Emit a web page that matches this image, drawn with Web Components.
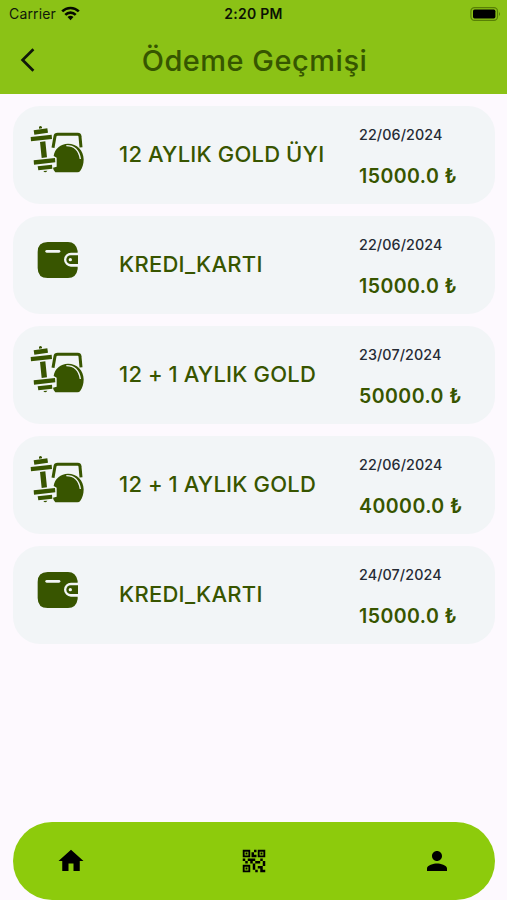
<!DOCTYPE html>
<html lang="tr">
<head>
<meta charset="utf-8">
<title>Ödeme Geçmişi</title>
<style>
  body {
    margin: 0;
    background: #fdf9fe;
    font-family: Inter, "Liberation Sans", sans-serif;
  }
</style>
</head>
<body>

<payment-app>
  <status-bar slot="top"></status-bar>
  <app-header slot="top">Ödeme Geçmişi</app-header>
  <payment-card icon="gym">
    12 AYLIK GOLD ÜYI
    <span slot="date">22/06/2024</span>
    <span slot="amount">15000.0 ₺</span>
  </payment-card>
  <payment-card icon="wallet">
    KREDI_KARTI
    <span slot="date">22/06/2024</span>
    <span slot="amount">15000.0 ₺</span>
  </payment-card>
  <payment-card icon="gym">
    12 + 1 AYLIK GOLD
    <span slot="date">23/07/2024</span>
    <span slot="amount">50000.0 ₺</span>
  </payment-card>
  <payment-card icon="gym">
    12 + 1 AYLIK GOLD
    <span slot="date">22/06/2024</span>
    <span slot="amount">40000.0 ₺</span>
  </payment-card>
  <payment-card icon="wallet">
    KREDI_KARTI
    <span slot="date">24/07/2024</span>
    <span slot="amount">15000.0 ₺</span>
  </payment-card>
  <nav-bar slot="bottom"></nav-bar>
</payment-app>

<template id="payment-app-template">
  <style>
    :host {
      display: flex;
      flex-direction: column;
      height: 900px;
      overflow: hidden;
    }
    header { background: #8bc216; height: 94px; }
    main {
      flex: 1;
      display: flex;
      flex-direction: column;
      gap: 12px;
      padding: 12px 12px 0 13px;
    }
  </style>
  <header><slot name="top"></slot></header>
  <main><slot></slot></main>
  <slot name="bottom"></slot>
</template>

<template id="status-bar-template">
  <style>
    :host {
      display: grid;
      grid-template-columns: 1fr auto 1fr;
      align-items: center;
      height: 27px;
      padding: 0 6px 0 9px;
      font-size: 14px;
      line-height: 26px;
      color: #10180a;
    }
    .carrier { display: flex; align-items: center; gap: 6px; letter-spacing: .15px; }
    .carrier svg { margin: -1px 0 0 -1px; }
    .time {
      margin-right: 3px;
      font-size: 14px;
      font-weight: 600;
      letter-spacing: .25px;
      color: #0b1204;
    }
    .battery { justify-self: end; }
    svg { display: block; }
  </style>
  <div class="carrier">
    <span>Carrier</span>
    <svg width="19" height="15" viewBox="0 0 19 15">
      <g fill="none" stroke="#050a00" stroke-width="2.6">
        <path d="M1.2 5.4a11.8 11.8 0 0 1 16.6 0"/>
        <path d="M4.3 8.8a7.4 7.4 0 0 1 10.4 0"/>
      </g>
      <path fill="#050a00" d="M6.5 11.1a4.3 4.3 0 0 1 6 0l-3 3.1z"/>
    </svg>
  </div>
  <span class="time">2:20 PM</span>
  <svg class="battery" width="31" height="14" viewBox="0 0 31 14">
    <rect x=".9" y=".6" width="26.6" height="12.8" rx="3.6" fill="none" stroke="#588006" stroke-width="1.2"/>
    <rect x="3" y="2.6" width="22.4" height="8.8" rx="1.6"/>
    <path d="M29 5q2 2 0 4z" fill="#588006"/>
  </svg>
</template>

<template id="app-header-template">
  <style>
    :host {
      display: grid;
      grid-template-columns: 56px 1fr 56px;
      align-items: center;
      height: 66px;
    }
    svg { display: block; margin-left: 20px; }
    h1 {
      margin: 1px 0 0 2px;
      font-size: 29px;
      line-height: 36px;
      font-weight: 500;
      letter-spacing: .5px;
      text-align: center;
      white-space: nowrap;
      color: #365600;
    }
  </style>
  <svg width="16" height="24" viewBox="0 0 16 24">
    <path d="M13.400 1.200 2.600 12l10.800 10.800" fill="none" stroke="#10180a" stroke-width="2.7"/>
  </svg>
  <h1><slot></slot></h1>
</template>

<template id="payment-card-template">
  <style>
    :host {
      display: grid;
      grid-template-columns: 89px 240px 1fr;
      box-sizing: border-box;
      height: 98px;
      padding-left: 17px;
      border-radius: 27px;
      background: #f2f5f7;
      color: #385500;
    }
    svg { display: none; margin-top: 19px; fill: #385500; }
    :host([icon="gym"]) .gym,
    :host([icon="wallet"]) .wallet { display: block; }
    .name {
      align-self: center;
      padding-bottom: 2px;
      font-size: 22px;
      line-height: 28px;
      font-weight: 450;
      letter-spacing: .25px;
      word-spacing: -.4px;
      white-space: nowrap;
    }
    .info { white-space: nowrap; }
    .date {
      margin-top: 19px;
      font-size: 14.3px;
      line-height: 20px;
      font-weight: 450;
      letter-spacing: .1px;
      color: #252b35;
    }
    .amount {
      margin-top: 18px;
      font-size: 19.5px;
      line-height: 26px;
      font-weight: 600;
      letter-spacing: .45px;
    }
  </style>
  <div>
    <svg class="gym" width="54" height="50" viewBox="30 30 162 150">
      <!-- dumbbell -->
      <path d="M57 36q4-6 9 0v4l-9 1zM41 46l41-6 2 13-41 6zM32 66l63-7 1 13-63 7zM60 81l16-2 5 48-16 2zM41 136l64-7 1 13-64 7zM53 154l43-5 1 12-42 5zM70 168l12-1q-6 9-12 1z"/>
      <!-- kettlebell -->
      <path d="M99 98l6-34q1-6 8-6h60q7 0 7 7l3 32" fill="none" stroke="#385500" stroke-width="9" stroke-linejoin="round"/>
      <path d="M106 172q-6-6-7-14l11-3v-27l-9-5c3-22 21-37 43-37 27 0 47 20 47 47 0 15-4 26-10 34q-3 5-9 5z"/>
      <path d="M139 92c23 0 38 14 42 40" fill="none" stroke="#f2f5f7" stroke-width="4"/>
    </svg>
    <svg class="wallet" width="54" height="50" viewBox="30 30 162 150">
      <path d="M83 51h61q24 0 29 27v5h-20a21 21 0 0 0 0 42h20v7q-4 27-29 27H83q-30 0-30-30V81q0-30 30-30z"/>
      <path d="M80 79h37" fill="none" stroke="#f2f5f7" stroke-width="8" stroke-linecap="round"/>
      <path d="M174 91h-22a13 13 0 0 0 0 26h22z"/>
      <circle cx="151" cy="104" r="5" fill="#f2f5f7"/>
    </svg>
  </div>
  <div class="name"><slot></slot></div>
  <div class="info">
    <div class="date"><slot name="date"></slot></div>
    <div class="amount"><slot name="amount"></slot></div>
  </div>
</template>

<template id="nav-bar-template">
  <style>
    :host {
      display: flex;
      align-items: center;
      justify-content: space-between;
      box-sizing: border-box;
      height: 78px;
      margin: 0 12px 0 13px;
      padding: 0 43px;
      border-radius: 39px;
      background: #8dcb0c;
    }
    svg { display: block; width: 30px; height: 30px; }
  </style>
  <svg viewBox="0 0 24 24"><path d="M10 20v-6h4v6h5v-8h3L12 3 2 12h3v8z"/></svg>
  <svg viewBox="0 0 24 24"><path d="M15 21h-2v-2h2v2zM13 14h-2v5h2v-5zM21 12h-2v4h2v-4zM19 10h-2v2h2v-2zM7 12H5v2h2v-2zM5 10H3v2h2v-2zM12 5h2V3h-2v2zM4.500 4.500v3h3v-3h-3zM9 9H3V3h6v6zM4.500 16.500v3h3v-3h-3zM9 21H3v-6h6v6zM16.500 4.500v3h3v-3h-3zM21 9h-6V3h6v6zM19 19v-3h-4v2h2v3h4v-2h-2zM17 12h-4v2h4v-2zM13 10H7v2h2v2h2v-2h2v-2zM14 9V7h-2V5h-2v4h4zM6.750 5.250h-1.500v1.500h1.500v-1.500zM6.750 17.250h-1.500v1.500h1.500v-1.500zM18.750 5.250h-1.500v1.500h1.500v-1.500z" fill-rule="evenodd"/></svg>
  <svg viewBox="0 0 24 24"><path d="M12 12c2.210 0 4-1.790 4-4s-1.790-4-4-4-4 1.790-4 4 1.790 4 4 4zm0 2c-2.670 0-8 1.340-8 4v2h16v-2c0-2.660-5.330-4-8-4z"/></svg>
</template>

<script>
class TemplateElement extends HTMLElement {
  constructor() {
    super();
    let template = document.getElementById(this.localName + '-template');
    this.attachShadow({mode: 'open'});
    this.shadowRoot.appendChild(template.content.cloneNode(true));
  }
}

customElements.define('payment-app', class extends TemplateElement {});
customElements.define('status-bar', class extends TemplateElement {});
customElements.define('app-header', class extends TemplateElement {});
customElements.define('payment-card', class extends TemplateElement {});
customElements.define('nav-bar', class extends TemplateElement {});
</script>
</body>
</html>
